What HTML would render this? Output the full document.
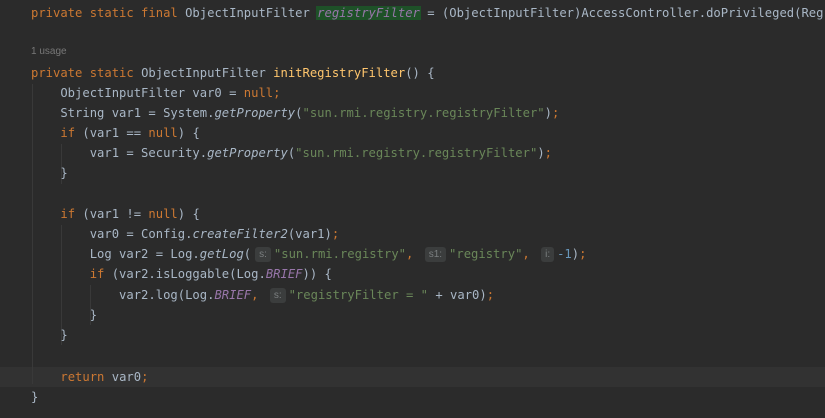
<!DOCTYPE html>
<html><head><style>
body{margin:0;width:825px;height:418px;overflow:hidden;background:#2b2b2b;position:relative;font-family:"DejaVu Sans Mono","Liberation Mono",monospace;font-size:12.2px;color:#a9b7c6}
.l{position:absolute;left:31px;white-space:pre;height:20px;line-height:20px}
.k{color:#cc7832}.s{color:#6a8759}.m{color:#ffc66d}.i{font-style:italic}.c{color:#9876aa;font-style:italic}.n{color:#6897bb}
.h{display:inline-block;background:#3b3d3d;color:#7b7f80;font-family:"Liberation Sans",sans-serif;font-size:10px;line-height:15px;padding:0 4px;border-radius:3px;margin-right:3px;margin-left:4px;vertical-align:1px}
.h0{margin-left:0}
.g{position:absolute;width:1px;background:#393939}
.u{position:absolute;left:31px;top:46px;font-family:"Liberation Sans",sans-serif;font-size:10px;color:#787878}
</style></head><body>
<div style="position:absolute;left:0;top:367px;width:825px;height:20px;background:#323232"></div>
<div class="g" style="left:32px;top:84px;height:300px"></div>
<div class="g" style="left:61px;top:144px;height:40px"></div>
<div class="g" style="left:61px;top:225px;height:120px"></div>
<div class="g" style="left:90px;top:285px;height:40px"></div>
<div class="l" style="top:3px"><span class="k">private static final </span>ObjectInputFilter <span class="c" style="background:#1e5128;padding:0 1px;margin:0 -1px">registryFilter</span> = (ObjectInputFilter)AccessController.doPrivileged(Reg</div>
<div class="u">1 usage</div>
<div class="l" style="top:63px"><span class="k">private static </span>ObjectInputFilter <span class="m">initRegistryFilter</span>() {</div>
<div class="l" style="top:83px">    ObjectInputFilter var0 = <span class="k">null;</span></div>
<div class="l" style="top:103px">    String var1 = System.<span class="i">getProperty</span>(<span class="s">"sun.rmi.registry.registryFilter"</span>)<span class="k">;</span></div>
<div class="l" style="top:123px">    <span class="k">if </span>(var1 == <span class="k">null</span>) {</div>
<div class="l" style="top:143px">        var1 = Security.<span class="i">getProperty</span>(<span class="s">"sun.rmi.registry.registryFilter"</span>)<span class="k">;</span></div>
<div class="l" style="top:163px">    }</div>
<div class="l" style="top:204px">    <span class="k">if </span>(var1 != <span class="k">null</span>) {</div>
<div class="l" style="top:224px">        var0 = Config.<span class="i">createFilter2</span>(var1)<span class="k">;</span></div>
<div class="l" style="top:244px">        Log var2 = Log.<span class="i">getLog</span>(<span class="h">s:</span><span class="s">"sun.rmi.registry"</span><span class="k">,</span> <span class="h">s1:</span><span class="s">"registry"</span><span class="k">,</span> <span class="h">i:</span><span class="n">-1</span>)<span class="k">;</span></div>
<div class="l" style="top:264px">        <span class="k">if </span>(var2.isLoggable(Log.<span class="c">BRIEF</span>)) {</div>
<div class="l" style="top:285px">            var2.log(Log.<span class="c">BRIEF</span><span class="k">,</span> <span class="h">s:</span><span class="s">"registryFilter = "</span> + var0)<span class="k">;</span></div>
<div class="l" style="top:305px">        }</div>
<div class="l" style="top:325px">    }</div>
<div class="l" style="top:367px">    <span class="k">return </span>var0<span class="k">;</span></div>
<div class="l" style="top:387px">}</div>
</body></html>
